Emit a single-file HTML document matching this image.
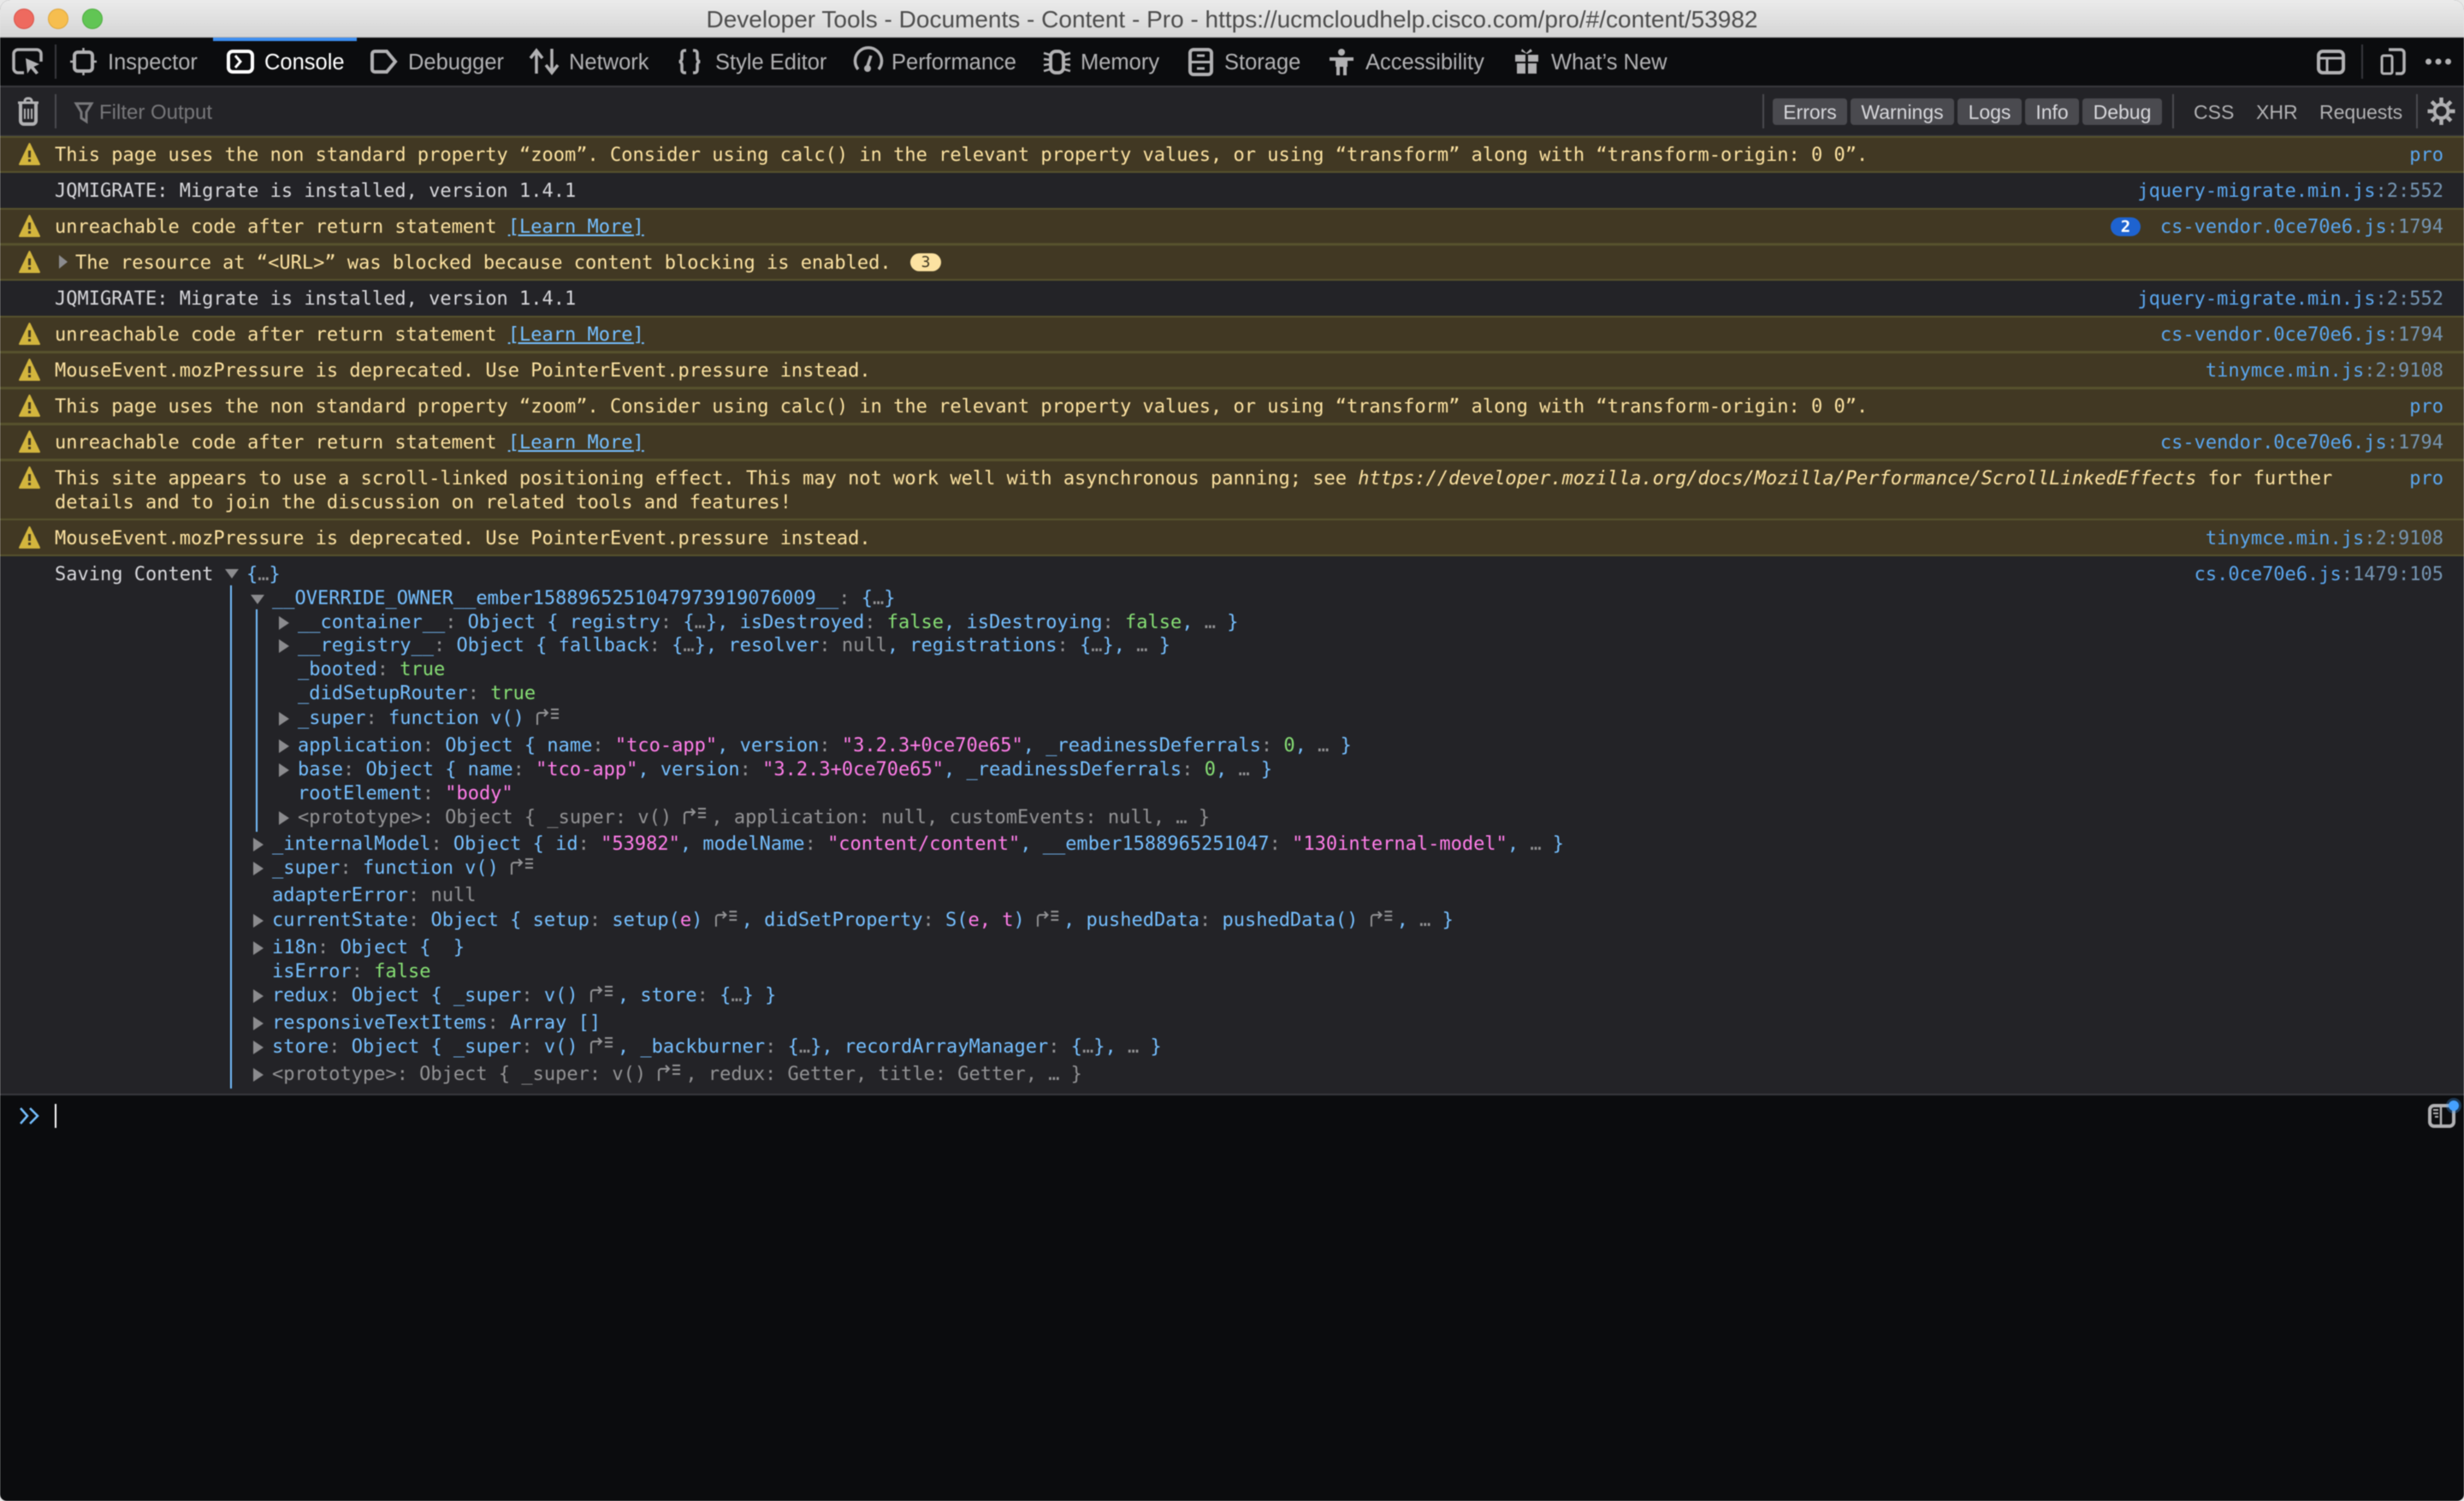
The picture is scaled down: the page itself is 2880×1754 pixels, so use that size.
<!DOCTYPE html>
<html><head><meta charset="utf-8"><style>
html,body{margin:0;padding:0;width:2880px;height:1754px;overflow:hidden;background:#e8e8e8}
#w{position:absolute;left:0;top:0;width:2880px;height:1754px;overflow:hidden;background:#0b0c0e;border-radius:12px 12px 8px 8px;filter:blur(.5px)}
#tb{position:absolute;left:0;top:0;width:2880px;height:43px;background:linear-gradient(#ebebeb,#d5d5d5);border-bottom:1px solid #b0b0b0}
.d{position:absolute;top:10px;width:24px;height:24px;border-radius:50%;box-sizing:border-box}
#title{position:absolute;left:0;top:0;width:2880px;text-align:center;font:28px/45px "Liberation Sans",sans-serif;color:#4d4d4d}
.s{position:absolute;font-family:"Liberation Sans",sans-serif;white-space:nowrap}
.tab{top:51px;font-size:25.5px;line-height:45px;color:#b1b1b3}
#fb{position:absolute;left:0;top:100px;width:2880px;height:56px;background:#232327;border-top:2px solid #38383d;border-bottom:2px solid #38383d}
.btn{position:absolute;top:115px;height:31px;background:#4a4a4f;border-radius:4px;color:#d7d7db;font:23px/33px "Liberation Sans",sans-serif;text-align:center}
.fl{top:115px;font-size:23px;line-height:33px;color:#b1b1b3}
.sep{position:absolute;width:2px;background:#38383d}
#c{position:absolute;left:0;top:160px;width:2880px;height:1118px;background:#232327}
#il{position:absolute;left:0;top:1278px;width:2880px;height:2px;background:#38383d}
.r{position:absolute;left:0;width:2880px;box-sizing:border-box;font:22px/28px "DejaVu Sans Mono","Liberation Mono",monospace;color:#d7d7db;white-space:pre}
.w{background:#413823;border-top:2px solid #57522d;border-bottom:2px solid #57522d;color:#fce2a1;margin-bottom:-2px}
.x{position:absolute;left:64px;top:7px}
.k{position:absolute;right:24px;top:7px;color:#5aa6ee}
.k i{font-style:normal;color:#7595b2}
.u{color:#75bfff;text-decoration:underline}
.t{position:absolute;height:28px;margin-top:1px;font:22px/28px "DejaVu Sans Mono","Liberation Mono",monospace;white-space:pre;color:#75bfff}
.c{color:#939395}.p{color:#ff7de9}.g{color:#86de74}
.dim,.dim .c{color:#939395}
.a{position:absolute;left:-22px;top:6px;width:0;height:0;border-left:12px solid #8b8b8e;border-top:8px solid transparent;border-bottom:8px solid transparent}
.ad{position:absolute;left:-25px;top:9px;width:0;height:0;border-top:11px solid #8b8b8e;border-left:8.5px solid transparent;border-right:8.5px solid transparent}
.j{display:inline-block;width:33px;height:22px;vertical-align:-3px}
svg.ov{position:absolute;left:0;top:0}
</style></head><body><div id="w">
<div id="tb"></div>
<div class="d" style="left:16px;background:#ee6a5f;border:1px solid #d9534a"></div>
<div class="d" style="left:56px;background:#f6be4f;border:1px solid #dfa63a"></div>
<div class="d" style="left:96px;background:#61c554;border:1px solid #4ead3f"></div>
<div id="title">Developer Tools - Documents - Content - Pro - https://ucmcloudhelp.cisco.com/pro/#/content/53982</div>

<div class="s tab" style="left:126px">Inspector</div>
<div class="s tab" style="left:309px;color:#fff">Console</div>
<div class="s tab" style="left:477px">Debugger</div>
<div class="s tab" style="left:665px">Network</div>
<div class="s tab" style="left:836px">Style Editor</div>
<div class="s tab" style="left:1042px">Performance</div>
<div class="s tab" style="left:1263px">Memory</div>
<div class="s tab" style="left:1431px">Storage</div>
<div class="s tab" style="left:1596px">Accessibility</div>
<div class="s tab" style="left:1813px">What’s New</div>
<div style="position:absolute;left:249px;top:44px;width:168px;height:4px;background:#3d8ef0"></div>

<div id="fb"></div>
<div class="s" style="left:116px;top:116px;font-size:24px;line-height:31px;color:#77777a">Filter Output</div>
<div class="btn" style="left:2072px;width:87px">Errors</div>
<div class="btn" style="left:2163px;width:121px">Warnings</div>
<div class="btn" style="left:2288px;width:75px">Logs</div>
<div class="btn" style="left:2367px;width:63px">Info</div>
<div class="btn" style="left:2434px;width:93px">Debug</div>
<div class="s fl" style="left:2564px">CSS</div>
<div class="s fl" style="left:2637px">XHR</div>
<div class="s fl" style="left:2711px">Requests</div>
<div class="sep" style="left:64px;top:52px;height:40px"></div>
<div class="sep" style="left:64px;top:110px;height:40px;background:#4a4a4f"></div>
<div class="sep" style="left:2060px;top:110px;height:40px;background:#4a4a4f"></div>
<div class="sep" style="left:2539px;top:110px;height:40px;background:#4a4a4f"></div>
<div class="sep" style="left:2824px;top:110px;height:40px;background:#4a4a4f"></div>
<div class="sep" style="left:2760px;top:52px;height:40px"></div>

<div id="c"></div>
<div class="r w" style="top:159px;height:43px"><span class="x">This page uses the non standard property “zoom”. Consider using calc() in the relevant property values, or using “transform” along with “transform-origin: 0 0”.</span><span class="k">pro</span></div>
<div class="r" style="top:201px;height:42px"><span class="x" style="top:9px">JQMIGRATE: Migrate is installed, version 1.4.1</span><span class="k" style="top:9px">jquery-migrate.min.js<i>:2:552</i></span></div>
<div class="r w" style="top:243px;height:43px"><span class="x">unreachable code after return statement <span class="u">[Learn More]</span></span><span class="k">cs-vendor.0ce70e6.js<i>:1794</i></span></div>
<div class="r w" style="top:285px;height:43px"><span class="x" style="left:88px">The resource at “&lt;URL&gt;” was blocked because content blocking is enabled.</span></div>
<div class="r" style="top:327px;height:42px"><span class="x" style="top:9px">JQMIGRATE: Migrate is installed, version 1.4.1</span><span class="k" style="top:9px">jquery-migrate.min.js<i>:2:552</i></span></div>
<div class="r w" style="top:369px;height:43px"><span class="x">unreachable code after return statement <span class="u">[Learn More]</span></span><span class="k">cs-vendor.0ce70e6.js<i>:1794</i></span></div>
<div class="r w" style="top:411px;height:43px"><span class="x">MouseEvent.mozPressure is deprecated. Use PointerEvent.pressure instead.</span><span class="k">tinymce.min.js<i>:2:9108</i></span></div>
<div class="r w" style="top:453px;height:43px"><span class="x">This page uses the non standard property “zoom”. Consider using calc() in the relevant property values, or using “transform” along with “transform-origin: 0 0”.</span><span class="k">pro</span></div>
<div class="r w" style="top:495px;height:43px"><span class="x">unreachable code after return statement <span class="u">[Learn More]</span></span><span class="k">cs-vendor.0ce70e6.js<i>:1794</i></span></div>
<div class="r w" style="top:537px;height:71px"><span class="x">This site appears to use a scroll-linked positioning effect. This may not work well with asynchronous panning; see <em>https://developer.mozilla.org/docs/Mozilla/Performance/ScrollLinkedEffects</em> for further
details and to join the discussion on related tools and features!</span><span class="k">pro</span></div>
<div class="r w" style="top:606px;height:44px"><span class="x" style="top:8px">MouseEvent.mozPressure is deprecated. Use PointerEvent.pressure instead.</span><span class="k" style="top:8px">tinymce.min.js<i>:2:9108</i></span></div>

<div class="t" style="left:64px;top:657px;color:#d7d7db">Saving Content</div>
<div style="position:absolute;left:263px;top:665px;width:0;height:0;border-top:11px solid #8b8b8e;border-left:8.5px solid transparent;border-right:8.5px solid transparent"></div>
<div class="t" style="left:288px;top:657px">{<span class="c">…</span>}</div>
<div class="k t" style="right:24px;top:657px;color:#5aa6ee">cs.0ce70e6.js<i>:1479:105</i></div>
<div style="position:absolute;left:269px;top:684px;width:2px;height:588px;background:#75bfff"></div>
<div style="position:absolute;left:299px;top:712px;width:2px;height:260px;background:#75bfff"></div>

<div class="t" style="left:318px;top:685px"><b class="ad"></b>__OVERRIDE_OWNER__ember1588965251047973919076009__<span class="c">:</span> {<span class="c">…</span>}</div>
<div class="t" style="left:348px;top:713px"><b class="a"></b>__container__<span class="c">:</span> Object { registry<span class="c">:</span> {<span class="c">…</span>}, isDestroyed<span class="c">:</span> <span class="g">false</span>, isDestroying<span class="c">:</span> <span class="g">false</span>, <span class="c">…</span> }</div>
<div class="t" style="left:348px;top:740px"><b class="a"></b>__registry__<span class="c">:</span> Object { fallback<span class="c">:</span> {<span class="c">…</span>}, resolver<span class="c">:</span> <span class="c">null</span>, registrations<span class="c">:</span> {<span class="c">…</span>}, <span class="c">…</span> }</div>
<div class="t" style="left:348px;top:768px">_booted<span class="c">:</span> <span class="g">true</span></div>
<div class="t" style="left:348px;top:796px">_didSetupRouter<span class="c">:</span> <span class="g">true</span></div>
<div class="t" style="left:348px;top:825px"><b class="a"></b>_super<span class="c">:</span> function v() <svg class="j" viewBox="0 0 33 22"><path d="M2 20V9a3 3 0 0 1 3-3h8M10 2l4 4-4 4" fill="none" stroke="#939395" stroke-width="2"/><path d="M18 2h9M18 7h9M18 12h9" stroke="#939395" stroke-width="2"/></svg></div>
<div class="t" style="left:348px;top:857px"><b class="a"></b>application<span class="c">:</span> Object { name<span class="c">:</span> <span class="p">"tco-app"</span>, version<span class="c">:</span> <span class="p">"3.2.3+0ce70e65"</span>, _readinessDeferrals<span class="c">:</span> <span class="g">0</span>, <span class="c">…</span> }</div>
<div class="t" style="left:348px;top:885px"><b class="a"></b>base<span class="c">:</span> Object { name<span class="c">:</span> <span class="p">"tco-app"</span>, version<span class="c">:</span> <span class="p">"3.2.3+0ce70e65"</span>, _readinessDeferrals<span class="c">:</span> <span class="g">0</span>, <span class="c">…</span> }</div>
<div class="t" style="left:348px;top:913px">rootElement<span class="c">:</span> <span class="p">"body"</span></div>
<div class="t dim" style="left:348px;top:941px"><b class="a"></b>&lt;prototype&gt;: Object { _super: v() <svg class="j" viewBox="0 0 33 22"><path d="M2 20V9a3 3 0 0 1 3-3h8M10 2l4 4-4 4" fill="none" stroke="#939395" stroke-width="2"/><path d="M18 2h9M18 7h9M18 12h9" stroke="#939395" stroke-width="2"/></svg>, application: null, customEvents: null, … }</div>
<div class="t" style="left:318px;top:972px"><b class="a"></b>_internalModel<span class="c">:</span> Object { id<span class="c">:</span> <span class="p">"53982"</span>, modelName<span class="c">:</span> <span class="p">"content/content"</span>, __ember1588965251047<span class="c">:</span> <span class="p">"130internal-model"</span>, <span class="c">…</span> }</div>
<div class="t" style="left:318px;top:1000px"><b class="a"></b>_super<span class="c">:</span> function v() <svg class="j" viewBox="0 0 33 22"><path d="M2 20V9a3 3 0 0 1 3-3h8M10 2l4 4-4 4" fill="none" stroke="#939395" stroke-width="2"/><path d="M18 2h9M18 7h9M18 12h9" stroke="#939395" stroke-width="2"/></svg></div>
<div class="t" style="left:318px;top:1032px">adapterError<span class="c">:</span> <span class="c">null</span></div>
<div class="t" style="left:318px;top:1061px"><b class="a"></b>currentState<span class="c">:</span> Object { setup<span class="c">:</span> setup(<span class="p">e</span>) <svg class="j" style="width:32px" viewBox="0 0 33 22"><path d="M2 20V9a3 3 0 0 1 3-3h8M10 2l4 4-4 4" fill="none" stroke="#939395" stroke-width="2"/><path d="M18 2h9M18 7h9M18 12h9" stroke="#939395" stroke-width="2"/></svg>, didSetProperty<span class="c">:</span> S(<span class="p">e, t</span>) <svg class="j" style="width:32px" viewBox="0 0 33 22"><path d="M2 20V9a3 3 0 0 1 3-3h8M10 2l4 4-4 4" fill="none" stroke="#939395" stroke-width="2"/><path d="M18 2h9M18 7h9M18 12h9" stroke="#939395" stroke-width="2"/></svg>, pushedData<span class="c">:</span> pushedData() <svg class="j" style="width:32px" viewBox="0 0 33 22"><path d="M2 20V9a3 3 0 0 1 3-3h8M10 2l4 4-4 4" fill="none" stroke="#939395" stroke-width="2"/><path d="M18 2h9M18 7h9M18 12h9" stroke="#939395" stroke-width="2"/></svg>, <span class="c">…</span> }</div>
<div class="t" style="left:318px;top:1093px"><b class="a"></b>i18n<span class="c">:</span> Object {  }</div>
<div class="t" style="left:318px;top:1121px">isError<span class="c">:</span> <span class="g">false</span></div>
<div class="t" style="left:318px;top:1149px"><b class="a"></b>redux<span class="c">:</span> Object { _super<span class="c">:</span> v() <svg class="j" viewBox="0 0 33 22"><path d="M2 20V9a3 3 0 0 1 3-3h8M10 2l4 4-4 4" fill="none" stroke="#939395" stroke-width="2"/><path d="M18 2h9M18 7h9M18 12h9" stroke="#939395" stroke-width="2"/></svg>, store<span class="c">:</span> {<span class="c">…</span>} }</div>
<div class="t" style="left:318px;top:1181px"><b class="a"></b>responsiveTextItems<span class="c">:</span> Array []</div>
<div class="t" style="left:318px;top:1209px"><b class="a"></b>store<span class="c">:</span> Object { _super<span class="c">:</span> v() <svg class="j" viewBox="0 0 33 22"><path d="M2 20V9a3 3 0 0 1 3-3h8M10 2l4 4-4 4" fill="none" stroke="#939395" stroke-width="2"/><path d="M18 2h9M18 7h9M18 12h9" stroke="#939395" stroke-width="2"/></svg>, _backburner<span class="c">:</span> {<span class="c">…</span>}, recordArrayManager<span class="c">:</span> {<span class="c">…</span>}, <span class="c">…</span> }</div>
<div class="t dim" style="left:318px;top:1241px"><b class="a"></b>&lt;prototype&gt;: Object { _super: v() <svg class="j" viewBox="0 0 33 22"><path d="M2 20V9a3 3 0 0 1 3-3h8M10 2l4 4-4 4" fill="none" stroke="#939395" stroke-width="2"/><path d="M18 2h9M18 7h9M18 12h9" stroke="#939395" stroke-width="2"/></svg>, redux: Getter, title: Getter, … }</div>

<div id="il"></div>
<div style="position:absolute;left:64px;top:1290px;width:2px;height:28px;background:#fff"></div>

<div style="position:absolute;left:2467px;top:254px;width:35px;height:22px;border-radius:11px;background:#1e63d0;color:#fff;font:bold 19px/22px 'DejaVu Sans Mono',monospace;text-align:center">2</div>
<div style="position:absolute;left:1064px;top:296px;width:36px;height:21px;border-radius:11px;background:#fce2a1;color:#413823;font:18px/21px 'DejaVu Sans Mono',monospace;text-align:center">3</div>
<div style="position:absolute;left:69px;top:298px;width:0;height:0;border-left:10px solid #8b8b8e;border-top:8px solid transparent;border-bottom:8px solid transparent"></div>

<svg class="ov" width="2880" height="1754" viewBox="0 0 2880 1754">
<g fill="none" stroke="#b1b1b3" stroke-width="3.5">
<path d="M28 85H21a5 5 0 0 1-5-5V63a5 5 0 0 1 5-5H43a5 5 0 0 1 5 5V72"/>
<rect x="87" y="61" width="21" height="22" rx="4" stroke-width="4"/>
<path d="M97.500 56V61M97.500 83V88M82 72H87M108 72H113" stroke-width="2.500"/>
<path d="M438 60H452L462 72L452 84H438a3 3 0 0 1-3-3V63a3 3 0 0 1 3-3z" stroke-width="4"/>
<path d="M627 86V60M620 68L627 59L634 68M645 57V84M638 76L645 85L652 76"/>
<path d="M802 59h-2a3 3 0 0 0-3 3v6a4 4 0 0 1-3 4a4 4 0 0 1 3 4v6a3 3 0 0 0 3 3h2M810 59h2a3 3 0 0 1 3 3v6a4 4 0 0 0 3 4a4 4 0 0 0-3 4v6a3 3 0 0 1-3 3h-2"/>
<path d="M1003 81A15.500 15.500 0 1 1 1027 81M1013 80L1018 65" stroke-width="3.500"/>
<rect x="1228" y="60" width="15" height="25" rx="6" stroke-width="4"/>
<path d="M1220 62l7 2M1220 69l7 1M1220 76l7-1M1220 83l7-2M1251 62l-7 2M1251 69l-7 1M1251 76l-7-1M1251 83l-7-2" stroke-width="2.500"/>
<rect x="1391" y="58" width="25" height="29" rx="4" stroke-width="4"/>
<path d="M1391 72.500H1416M1399 65H1408M1399 80H1408" stroke-width="3"/>
<rect x="2710" y="60" width="29" height="25" rx="5" stroke-width="4"/>
<path d="M2710 68H2739M2720 68V85" stroke-width="3"/>
<rect x="2784" y="65" width="12" height="21" rx="2" stroke-width="3"/>
<path d="M2792 58H2806a4 4 0 0 1 4 4V82a4 4 0 0 1-4 4h-6"/>
<path d="M21 120H45M29 120v-2a3 3 0 0 1 3-3h2a3 3 0 0 1 3 3v2" stroke-width="3"/>
<path d="M24 121V141a4 4 0 0 0 4 4h10a4 4 0 0 0 4-4V121" stroke-width="4"/>
<path d="M29 127V139M33 127V139M37 127V139" stroke-width="2"/>
<path d="M89 121H107L101 131V142L95 138V131Z" stroke="#77777a" stroke-width="3"/>
<circle cx="2853.500" cy="130" r="8" stroke-width="4"/>
<path d="M2853.500 114V120M2853.500 140V146M2837.500 130H2843.500M2863.500 130H2869.500M2842.200 118.700L2846.400 122.900M2860.600 137.100L2864.800 141.300M2842.200 141.300L2846.400 137.100M2860.600 122.900L2864.800 118.700" stroke-width="4.500"/>
<rect x="2840" y="1292" width="28" height="24" rx="5" stroke-width="4"/>
<path d="M2853 1292V1316" stroke-width="2.500"/>
<path d="M2844 1297H2850M2844 1301H2850M2846 1305H2850" stroke-width="2"/>
</g>
<g fill="none" stroke="#fff">
<rect x="267" y="60" width="28" height="24" rx="5" stroke-width="4"/>
<path d="M275 65L281 72L275 79" stroke-width="3"/>
</g>
<path d="M30 68L46 75L39.500 78L45 85L42 87L36 80L32 86Z" fill="#b1b1b3"/>
<g fill="#b1b1b3">
<circle cx="1014" cy="80" r="4"/>
<circle cx="1568" cy="61" r="4"/>
<path d="M1554 67H1582V71H1575V78H1574V88H1570V78H1566V88H1562V78H1561V71H1554Z"/>
<path d="M1771 64H1783V72H1771ZM1786 64H1798V72H1786ZM1773 74H1783V86H1773ZM1786 74H1796V86H1786ZM1779 57L1784 62L1789 57L1791 60L1785 63L1778 60Z"/>
<circle cx="2838.500" cy="72" r="3.500"/><circle cx="2850" cy="72" r="3.500"/><circle cx="2861.500" cy="72" r="3.500"/>
</g>
<g id="warn">
<path d="M34.500 168L46 192H23Z" fill="#d3b53d" stroke="#d3b53d" stroke-width="2" stroke-linejoin="round"/>
<path d="M34.500 176V184M34.500 186V189" stroke="#413823" stroke-width="3"/>
</g>
<use href="#warn" y="84"/><use href="#warn" y="126"/><use href="#warn" y="210"/><use href="#warn" y="252"/><use href="#warn" y="294"/><use href="#warn" y="336"/><use href="#warn" y="378"/><use href="#warn" y="448"/>
<path d="M24 1295L32 1304L24 1313M35 1295L44 1304L35 1313" fill="none" stroke="#75bfff" stroke-width="2.500"/>
<circle cx="2868" cy="1292" r="9" fill="rgba(69,161,255,.3)"/><circle cx="2868" cy="1292" r="6" fill="#45a1ff"/>
</svg>
</div></body></html>
